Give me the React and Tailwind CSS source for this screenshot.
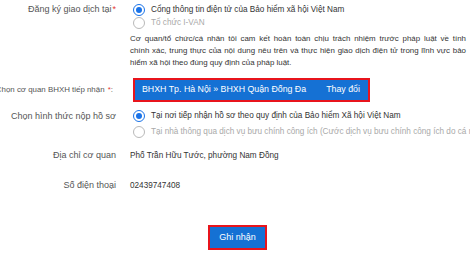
import React from "react";

function Radio({ checked, label, muted }) {
  return (
    <div className="flex items-center h-full whitespace-nowrap">
      <span
        className={
          "ml-[3px] w-[12px] h-[12px] rounded-full border-[1.5px] flex items-center justify-center shrink-0 " +
          (checked ? "border-[#1a73e8]" : "border-[#b9b9b9]")
        }
      >
        {checked && <span className="w-[6px] h-[6px] rounded-full bg-[#1a73e8]" />}
      </span>
      <span className={"ml-[6px] " + (muted ? "text-[#a9a9a9]" : "text-[#333]")}>{label}</span>
    </div>
  );
}

function Row({ label, required, colon, className = "", labelClass = "text-[9px]", children, align = "items-center" }) {
  return (
    <div className={"flex " + align + " " + className}>
      <div className={"w-[116px] shrink-0 text-right whitespace-nowrap text-[#555] flex justify-end " + labelClass}>
        <span>
          {label}
          {required && <span className="text-[#e53935] ml-[1px]">*</span>}
          {colon && ":"}
        </span>
      </div>
      <div className="ml-[14px] min-w-0 flex-1 text-[8.2px]">{children}</div>
    </div>
  );
}

export default function App() {
  return (
    <div className="w-[470px] h-[263px] bg-white overflow-hidden font-['Liberation_Sans',Arial,sans-serif]">
      <div className="pt-[3px]">
        <Row label="Đăng ký giao dịch tại" required align="items-start" labelClass="text-[9px] leading-[13px]">
          <div className="h-[13px] leading-[13px]">
            <Radio checked label="Cổng thông tin điện tử của Bảo hiểm xã hội Việt Nam" />
          </div>
          <div className="h-[13px] leading-[13px]">
            <Radio muted label="Tổ chức I-VAN" />
          </div>
          <div className="mt-[4px] w-[336px] text-[7.9px] leading-[12px] text-[#333]">
            <p className="whitespace-nowrap text-justify [text-align-last:justify]">
              Cơ quan/tổ chức/cá nhân tôi cam kết hoàn toàn chịu trách nhiệm trước pháp luật về tính
            </p>
            <p className="whitespace-nowrap text-justify [text-align-last:justify]">
              chính xác, trung thực của nội dung nêu trên và thực hiện giao dịch điện tử trong lĩnh vực bảo
            </p>
            <p className="whitespace-nowrap">hiểm xã hội theo đúng quy định của pháp luật.</p>
          </div>
        </Row>

        <Row label="Chọn cơ quan BHXH tiếp nhận " required colon className="mt-[9px]" labelClass="text-[7.9px] pr-[3px]">
          <div className="ml-[3px] w-[237px] h-[24px] border-2 border-[#e8141c] bg-[#1571d4] text-white text-[8.8px] flex items-center whitespace-nowrap">
            <span className="ml-[7px]">BHXH Tp. Hà Nội » BHXH Quận Đống Đa</span>
            <span className="ml-[20px]">Thay đổi</span>
          </div>
        </Row>

        <Row label="Chọn hình thức nộp hồ sơ" className="mt-[6px]" align="items-start" labelClass="text-[9px] leading-[16px]">
          <div className="h-[16px] leading-[16px]">
            <Radio checked label="Tại nơi tiếp nhận hồ sơ theo quy định của Bảo hiểm Xã hội Việt Nam" />
          </div>
          <div className="h-[16px] leading-[16px]">
            <Radio muted label="Tại nhà thông qua dịch vụ bưu chính công ích (Cước dịch vụ bưu chính công ích do cá nhân chi trả)" />
          </div>
        </Row>

        <Row label="Địa chỉ cơ quan" className="mt-[8px] h-[16px]">
          <span className="text-[#333] whitespace-nowrap">Phố Trần Hữu Tước, phường Nam Đồng</span>
        </Row>

        <Row label="Số điện thoại" className="mt-[14px] h-[16px]">
          <span className="text-[#333]">02439747408</span>
        </Row>

        <div className="mt-[31px] flex justify-center pl-[5px]">
          <button className="w-[59px] h-[25px] border-2 border-[#e8141c] bg-[#1571d4] text-white text-[9px]">
            Ghi nhận
          </button>
        </div>
      </div>
    </div>
  );
}
